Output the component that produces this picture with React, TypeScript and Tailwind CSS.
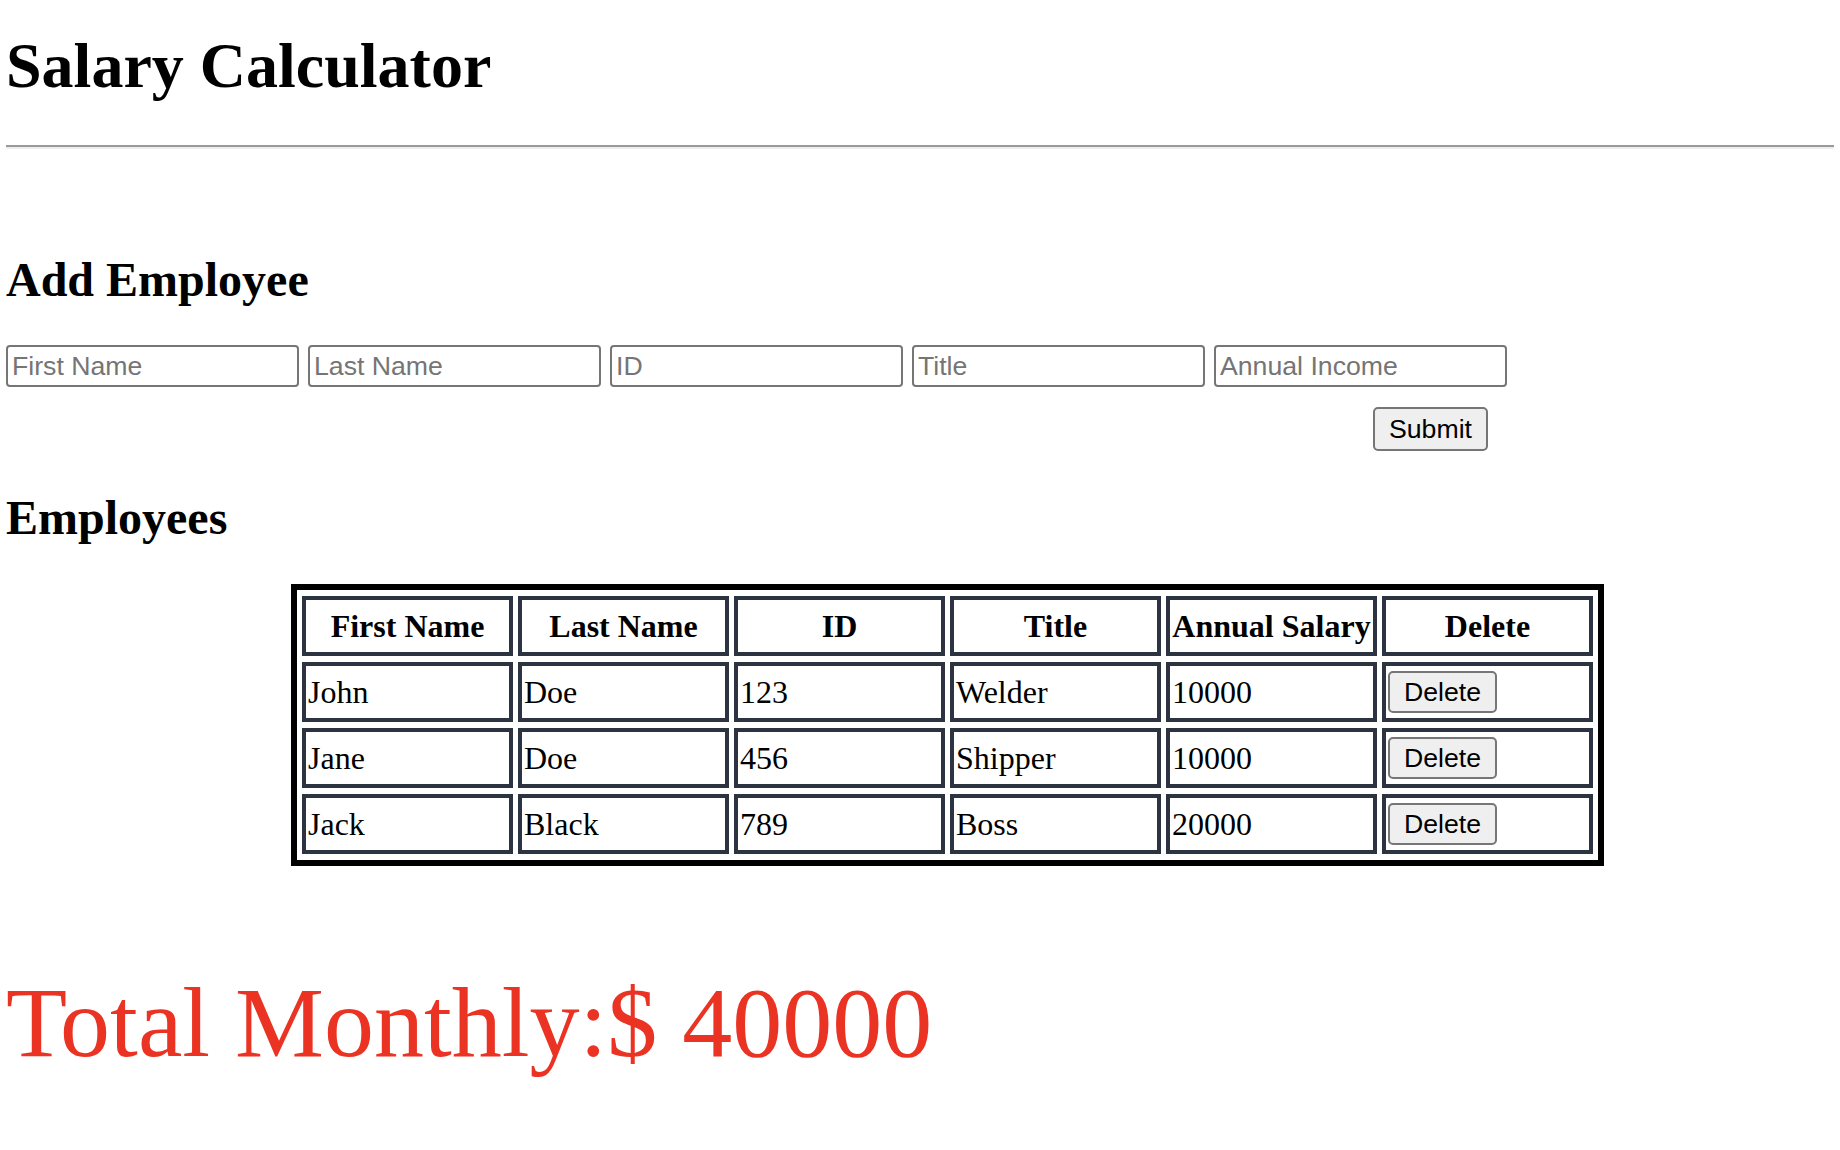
import { useState } from "react";

type Employee = {
  first: string;
  last: string;
  id: string;
  title: string;
  salary: number;
};

const initial: Employee[] = [
  { first: "John", last: "Doe", id: "123", title: "Welder", salary: 10000 },
  { first: "Jane", last: "Doe", id: "456", title: "Shipper", salary: 10000 },
  { first: "Jack", last: "Black", id: "789", title: "Boss", salary: 20000 },
];

const fields = ["First Name", "Last Name", "ID", "Title", "Annual Income"];
const headers = ["First Name", "Last Name", "ID", "Title", "Annual Salary", "Delete"];

const cell = "w-[211px] h-[59px] border-4 border-[#2b3440] p-[2px] whitespace-nowrap overflow-visible";

export default function App() {
  const [employees, setEmployees] = useState(initial);
  const total = employees.reduce((sum, e) => sum + e.salary, 0);

  return (
    <div className="px-[6px] pb-[40px] text-black bg-white font-['Liberation_Serif',serif]">
      <h1 className="mt-[29px] text-[64px] leading-[74px] font-bold">Salary Calculator</h1>
      <hr className="mt-[42px] border-0 border-t-2 border-t-[#9a9a9a] border-b-2 border-b-[#eeeeee]" />

      <h2 className="mt-[103px] text-[48px] leading-[56px] font-bold">Add Employee</h2>
      <div className="mt-[37px] flex gap-[9px]">
        {fields.map((f) => (
          <input
            key={f}
            placeholder={f}
            className="w-[293px] h-[42px] border-2 border-[#767676] rounded-[4px] px-[4px] text-[26.67px] font-['Liberation_Sans',Arial,sans-serif] placeholder:text-[#757575] outline-none"
          />
        ))}
      </div>
      <div className="mt-[20px] pl-[1367px]">
        <button className="h-[44px] px-[14px] border-2 border-[#767676] rounded-[5px] bg-[#efefef] text-[26.67px] leading-none font-['Liberation_Sans',Arial,sans-serif]">
          Submit
        </button>
      </div>

      <h2 className="mt-[39px] text-[48px] leading-[56px] font-bold">Employees</h2>

      <table className="mt-[38px] ml-[285px] table-fixed border-[6px] border-black border-separate border-spacing-x-[5px] border-spacing-y-[6px] text-[32px]">
        <thead>
          <tr>
            {headers.map((h) => (
              <th key={h} className={`${cell} font-bold text-center`}>
                {h}
              </th>
            ))}
          </tr>
        </thead>
        <tbody>
          {employees.map((e) => (
            <tr key={e.id}>
              <td className={cell}>{e.first}</td>
              <td className={cell}>{e.last}</td>
              <td className={cell}>{e.id}</td>
              <td className={cell}>{e.title}</td>
              <td className={cell}>{e.salary}</td>
              <td className={cell}>
                <button
                  onClick={() => setEmployees(employees.filter((x) => x.id !== e.id))}
                  className="block h-[42px] px-[14px] border-2 border-[#767676] rounded-[5px] bg-[#efefef] text-[26.67px] leading-none font-['Liberation_Sans',Arial,sans-serif]"
                >
                  Delete
                </button>
              </td>
            </tr>
          ))}
        </tbody>
      </table>

      <div className="mt-[102px] text-[100px] leading-[110px] text-[#ea3323]">Total Monthly:$ {total}</div>
    </div>
  );
}
